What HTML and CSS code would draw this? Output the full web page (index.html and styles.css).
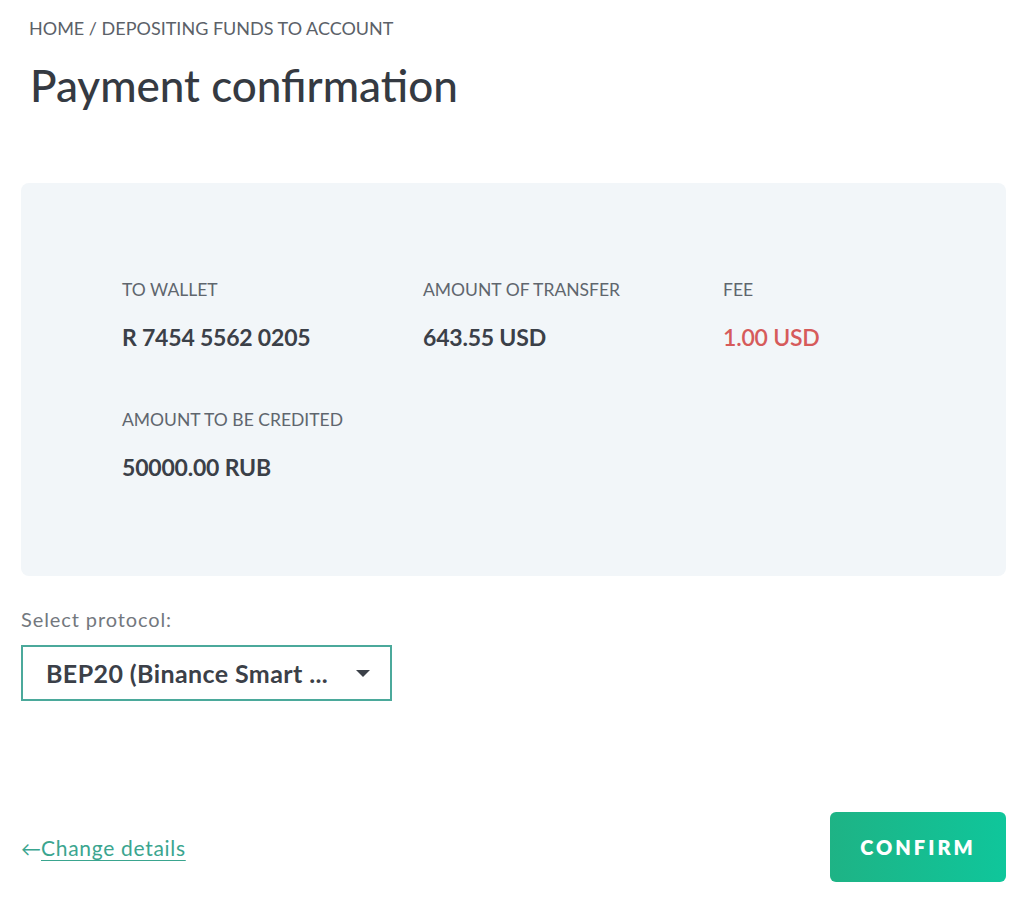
FILE: index.html
```html
<!DOCTYPE html>
<html>
<head>
<meta charset="utf-8">
<link rel="stylesheet" href="styles.css">
</head>
<body>
<div class="page">
  <div class="crumbs">HOME / DEPOSITING FUNDS TO ACCOUNT</div>
  <h1 class="title">Payment confirmation</h1>
  <div class="card">
    <div class="grid">
      <div class="item w1">
        <div class="label">TO WALLET</div>
        <div class="value">R 7454 5562 0205</div>
      </div>
      <div class="item w2">
        <div class="label">AMOUNT OF TRANSFER</div>
        <div class="value">643.55 USD</div>
      </div>
      <div class="item w3">
        <div class="label">FEE</div>
        <div class="value fee">1.00 USD</div>
      </div>
      <div class="item w1">
        <div class="label">AMOUNT TO BE CREDITED</div>
        <div class="value">50000.00 RUB</div>
      </div>
    </div>
  </div>
  <div class="proto-label">Select protocol:</div>
  <div class="select">
    <span class="select-text">BEP20 (Binance Smart ...</span>
    <span class="caret"></span>
  </div>
  <div class="footer">
    <a class="back" href="#"><span class="arrow">←</span><span class="back-text">Change details</span></a>
    <button class="confirm">CONFIRM</button>
  </div>
</div>
</body>
</html>
```
FILE: styles.css
```css
* { box-sizing: border-box; }
html, body { margin: 0; padding: 0; background: #fff; }
body { font-family: Lato, "Noto Sans", sans-serif; color: #3a3f46; }
.page { padding: 17px 18px 0 21px; width: 1024px; }
.crumbs { font-size: 18px; color: #5b6168; padding-left: 8px; line-height: 22px; letter-spacing: 0; }
.title { margin: 20px 0 0 9px; font-size: 44px; font-weight: 500; color: #353a42; line-height: 52px; letter-spacing: 0; }
.card { margin-top: 72px; background: #f2f6f9; border-radius: 8px; height: 393px; padding: 96px 0 0 101px; }
.grid { display: grid; grid-template-columns: 301px 300px 200px; row-gap: 58px; }
.label { font-size: 17.5px; color: #5f666e; line-height: 22px; }
.value { margin-top: 22px; font-size: 23px; font-weight: 700; color: #3b4048; line-height: 28px; letter-spacing: -0.2px; }
.value.fee { color: #d65b5b; font-weight: 600; }
.proto-label { margin-top: 31px; font-size: 20px; color: #73787e; letter-spacing: 0.9px; line-height: 24px; }
.select { margin-top: 14px; width: 371px; height: 56px; border: 2px solid #4ba99b; display: flex; align-items: center; justify-content: space-between; padding: 0 20px 0 23px; }
.select-text { font-size: 25px; font-weight: 700; color: #3b4048; letter-spacing: 0.4px; }
.caret { width: 0; height: 0; border-left: 7px solid transparent; border-right: 7px solid transparent; border-top: 7px solid #3b4048; }
.footer { margin-top: 111px; display: flex; justify-content: space-between; align-items: center; }
.back { display: flex; align-items: baseline; color: #3aa58f; text-decoration: none; font-size: 21px; }
.arrow { font-size: 20px; }
.back-text { text-decoration: underline; text-decoration-thickness: 1px; text-underline-offset: 4px; letter-spacing: 0.7px; }
.confirm { width: 176px; height: 70px; border: none; border-radius: 6px; background: linear-gradient(90deg, #1eb385, #0fc69b); color: #fff; font-family: Lato, sans-serif; font-weight: 800; font-size: 20px; letter-spacing: 3px; cursor: pointer; }
```
